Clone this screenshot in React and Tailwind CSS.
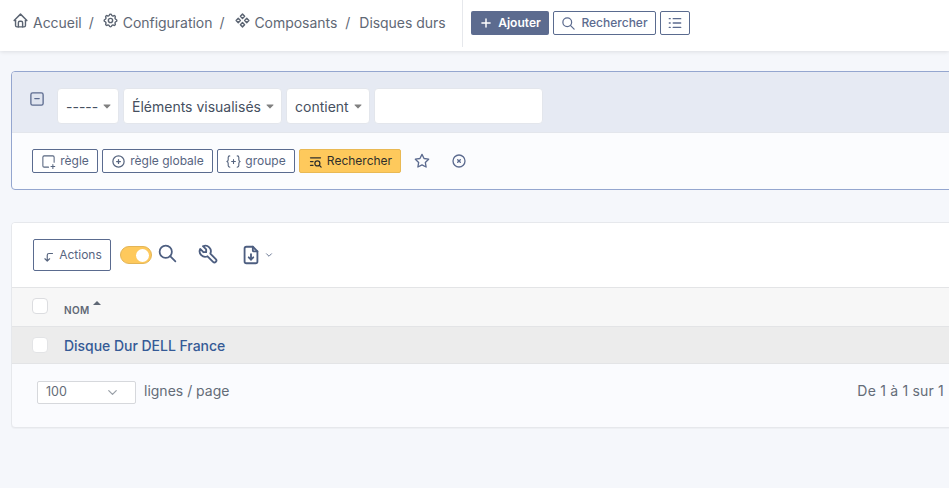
import {
  TbHome, TbSettings, TbComponents, TbPlus, TbSearch, TbCirclePlus,
  TbListSearch, TbStar, TbCircleX, TbCornerLeftDown, TbTool, TbFileDownload, TbChevronDown, TbCaretDownFilled
} from 'react-icons/tb'

function RuleIcon() {
  return (
    <svg viewBox="0 0 24 24" className="w-[15px] h-[15px]" fill="none" stroke="currentColor" strokeWidth="1.7" strokeLinecap="round" strokeLinejoin="round">
      <path d="M12 21H5a2 2 0 0 1-2-2V5a2 2 0 0 1 2-2h14a2 2 0 0 1 2 2v8" />
      <path d="M16 20h6M19 17v6" />
    </svg>
  )
}

function GroupIcon() {
  return (
    <svg viewBox="0 0 24 24" className="w-[15px] h-[15px]" fill="none" stroke="currentColor" strokeWidth="1.8" strokeLinecap="round" strokeLinejoin="round">
      <path d="M6 3c-2 0-2.500 1-2.500 2.500v3.500c0 1.500-1 2.500-2 3 1 .5 2 1.500 2 3v3.500C3.500 20 4 21 6 21" />
      <path d="M18 3c2 0 2.500 1 2.500 2.500v3.500c0 1.500 1 2.500 2 3-1 .5-2 1.500-2 3v3.500c0 1.500-.5 2.500-2.500 2.500" />
      <path d="M9 12h6M12 9v6" />
    </svg>
  )
}

function CollapseIcon() {
  return (
    <svg viewBox="0 0 16 16" className="w-[14px] h-[14px] mt-[4px] mr-[13px] ml-[1px] text-[#5c6b8f]" fill="#dfe4ef" stroke="currentColor" strokeWidth="1.500" strokeLinecap="round">
      <rect x="1" y="1" width="14" height="14" rx="2" />
      <path d="M5.500 7.500h5" />
    </svg>
  )
}

function ListIcon() {
  return (
    <svg viewBox="0 0 16 16" className="w-[14px] h-[14px]" fill="none" stroke="currentColor" strokeWidth="1.600" strokeLinecap="round">
      <path d="M6 3h8.500M6 8h8.500M6 13h8.500M1.500 3h1M1.500 8h1M1.500 13h1" />
    </svg>
  )
}

function Crumb({ icon: Icon, label, className, iconGap = 'mr-[4px]' }) {
  return (
    <span className={`flex items-center ${className}`}>
      <Icon className={`w-[17px] h-[17px] -mt-[4px] text-[#5b6472] ${iconGap}`} />
      <span>{label}</span>
    </span>
  )
}

function Select({ label, className }) {
  return (
    <div className={`h-[36px] whitespace-nowrap flex items-center justify-between pl-[8px] pr-[5px] bg-white border border-[#e3e6ec] rounded-[4px] text-[14px] text-[#46505f] ${className}`}>
      <span>{label}</span>
      <TbCaretDownFilled className="w-[12px] h-[12px] text-[#808080]" />
    </div>
  )
}

function RuleButton({ icon, label, className }) {
  return (
    <button className={`h-[24px] flex items-center gap-[4px] border border-[#5a6b8f] rounded-[2px] text-[12px] text-[#57657f] bg-white ${className}`}>
      {icon}
      <span>{label}</span>
    </button>
  )
}

export default function App() {
  return (
    <div className="w-[949px] h-[488px] overflow-hidden bg-[#f5f7fb] font-['Inter',sans-serif]">
      {/* Header */}
      <header className="h-[51px] bg-white shadow-[0_1px_4px_rgba(0,0,0,0.1)] flex items-start relative">
        <nav className="w-[463px] h-[47px] border-r border-[#e6e8ec] flex items-center pl-[12px] pb-[2px] text-[14px] tracking-[-0.03px] text-[#5f6875]">
          <Crumb icon={TbHome} label="Accueil" />
          <span className="ml-[7px]">/</span>
          <Crumb icon={TbSettings} label="Configuration" className="ml-[8px]" />
          <span className="ml-[7px]">/</span>
          <Crumb icon={TbComponents} label="Composants" className="ml-[10px]" iconGap="mr-[3px]" />
          <span className="ml-[8px]">/</span>
          <span className="ml-[9px] tracking-[-0.05px]">Disques durs</span>
        </nav>
        <div className="flex items-center gap-[4px] ml-[8px] mt-[11px]">
          <button className="h-[24px] w-[78px] flex items-center justify-center gap-[5px] bg-[#5c6b8f] rounded-[2px] text-[12px] font-semibold text-white">
            <TbPlus className="w-[14px] h-[14px]" strokeWidth={2.500} />
            Ajouter
          </button>
          <button className="h-[24px] w-[103px] flex items-center justify-center gap-[5px] border border-[#5a6b8f] rounded-[2px] text-[12px] font-medium text-[#5c6b8f] bg-white">
            <TbSearch className="w-[15px] h-[15px]" />
            Rechercher
          </button>
          <button className="h-[24px] w-[30px] flex items-center justify-center border border-[#5a6b8f] rounded-[2px] text-[#5c6b8f] bg-white">
            <ListIcon />
          </button>
        </div>
      </header>

      {/* Search card */}
      <section className="mt-[20px] ml-[11px] w-[1100px] h-[119px] border border-[#94a6cf] rounded-[4px] bg-[#fbfcfe] overflow-hidden">
        <div className="h-[61px] bg-[#e6eaf3] border-b border-[#e3e6ec] flex items-start pt-[16px] pl-[17px]">
          <CollapseIcon />
          <div className="flex gap-[4px]">
            <Select label="-----" className="w-[62px]" />
            <Select label="Éléments visualisés" className="w-[159px]" />
            <Select label="contient" className="w-[84px]" />
            <div className="h-[36px] w-[169px] bg-white border border-[#e3e6ec] rounded-[4px]" />
          </div>
        </div>
        <div className="flex items-center gap-[4px] pl-[20px] pt-[16px]">
          <RuleButton icon={<RuleIcon />} label="règle" className="w-[66px] justify-center" />
          <RuleButton icon={<TbCirclePlus className="w-[15px] h-[15px]" />} label="règle globale" className="w-[111px] justify-center" />
          <RuleButton icon={<GroupIcon />} label="groupe" className="w-[78px] justify-center" />
          <button className="h-[24px] w-[102px] flex items-center justify-center gap-[4px] bg-[#fec95c] border border-[#e9b954] rounded-[2px] text-[12px] font-normal text-[#2f2f2b]">
            <TbListSearch className="w-[15px] h-[15px]" />
            Rechercher
          </button>
          <TbStar className="w-[16px] h-[16px] ml-[9px] text-[#5c6b8f]" />
          <TbCircleX className="w-[16px] h-[16px] ml-[17px] text-[#5c6b8f]" />
        </div>
      </section>

      {/* Results card */}
      <section className="mt-[32px] ml-[11px] w-[1100px] h-[206px] border border-[#e6e8ec] rounded-[4px] bg-[#fafbfe] overflow-hidden shadow-[0_1px_1px_rgba(0,0,0,0.03)]">
        <div className="h-[64px] bg-white flex items-center pl-[21px]">
          <button className="h-[32px] w-[78px] flex items-center justify-center gap-[3px] border border-[#5a6b8f] rounded-[2px] text-[12px] text-[#57657f]">
            <TbCornerLeftDown className="w-[14px] h-[14px] mt-[3px]" />
            Actions
          </button>
          <div className="w-[32px] h-[18px] ml-[9px] rounded-full bg-[#fec95c] border border-[#e3b557] flex items-center justify-end pr-[2px]">
            <div className="w-[13px] h-[13px] rounded-full bg-white" />
          </div>
          <TbSearch className="w-[21px] h-[21px] ml-[5px] -mt-[4px] text-[#4d5e80]" />
          <TbTool className="w-[22px] h-[22px] ml-[19px] -mt-[3px] text-[#4d5e80]" />
          <TbFileDownload className="w-[22px] h-[22px] ml-[21px] text-[#4d5e80]" />
          <TbChevronDown className="w-[10px] h-[10px] ml-[2px] text-[#4d5e80]" />
        </div>
        <div className="h-[40px] bg-[#f7f7f7] border-y border-[#e3e4e6] flex items-center pl-[20px]">
          <span className="w-[16px] h-[16px] bg-white border border-[#dcdde0] rounded-[4px] -mt-[2px]" />
          <span className="ml-[16px] mt-[6px] text-[10px] font-semibold tracking-[0.4px] text-[#5f6875]">NOM</span>
          <span className="-mt-[9px] ml-[3px] w-0 h-0 border-x-[4px] border-x-transparent border-b-[4px] border-b-[#5f6875]" />
        </div>
        <div className="h-[37px] bg-[#ececec] border-b border-[#e3e4e6] flex items-center pl-[20px]">
          <span className="w-[16px] h-[16px] bg-white border border-[#e3e4e6] rounded-[4px]" />
          <span className="ml-[16px] text-[14px] font-medium tracking-[-0.03px] text-[#355a96]">Disque Dur DELL France</span>
        </div>
        <div className="h-[62px] flex items-start pt-[16px] pl-[25px] w-[932px] text-[14px] text-[#646c78]">
          <div className="w-[99px] h-[23px] mt-[1px] border border-[#d6d8dc] rounded-[2px] bg-white flex items-center justify-between pl-[8px] pr-[15px] text-[12.5px]">
            <span>100</span>
            <TbChevronDown className="w-[15px] h-[15px] text-[#9aa0a8]" />
          </div>
          <span className="ml-[8px]">lignes / page</span>
          <span className="ml-auto tracking-[0.2px]">De 1 à 1 sur 1</span>
        </div>
      </section>
    </div>
  )
}
